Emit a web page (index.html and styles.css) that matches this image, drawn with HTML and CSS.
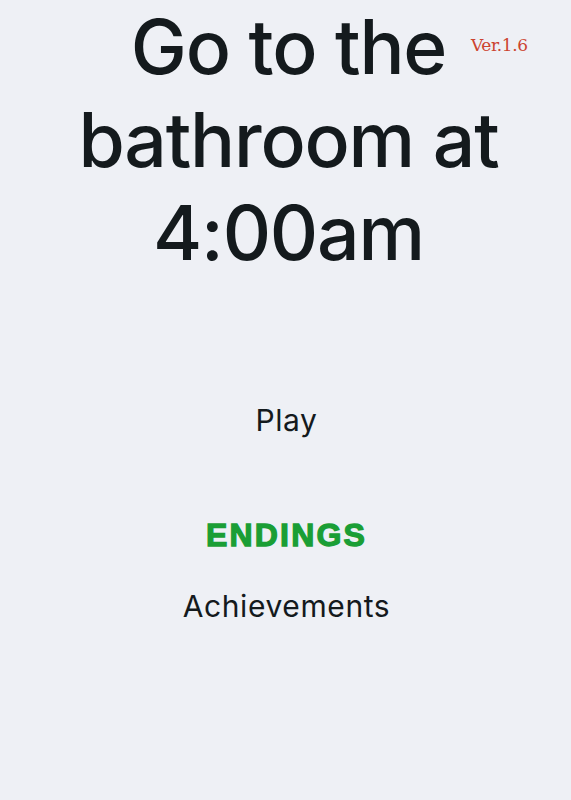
FILE: index.html
```html
<!DOCTYPE html>
<html lang="en">
<head>
  <meta charset="UTF-8" />
  <title>Go to the bathroom at 4:00am</title>
  <link rel="stylesheet" href="styles.css">
</head>
<body>

<div class="screen">
  <span class="version">Ver.1.6</span>
  <h1 class="title">
    <span class="line">Go to the</span>
    <span class="line">bathroom at</span>
    <span class="line">4:00am</span>
  </h1>

  <div class="menu">
    <button class="menu-item play">Play</button>
    <button class="menu-item endings">ENDINGS</button>
    <button class="menu-item">Achievements</button>
  </div>
</div>

</body>
</html>
```

FILE: styles.css
```css
html, body { margin: 0; padding: 0; background: #eef0f5; }
body { font-family: Inter, "Noto Sans", sans-serif; color: #141a1d; }
.screen { position: relative; width: 571px; height: 800px; display: flex; flex-direction: column; align-items: center; }
.version { position: absolute; top: 35px; left: 471px; font-family: "DejaVu Serif", "Liberation Serif", serif; font-size: 17px; color: #cc4430; letter-spacing: -0.4px; }
.title { margin: 0 0 0 6px; display: flex; flex-direction: column; align-items: center; font-size: 75px; font-weight: 500; line-height: 93px; letter-spacing: -1.2px; }
.line { display: block; white-space: nowrap; }
.menu { display: flex; flex-direction: column; align-items: center; margin-top: 123px; margin-left: 2px; }
.menu-item { background: none; border: none; padding: 0; font-family: Inter, "Noto Sans", sans-serif; font-size: 30px; color: #141a1d; letter-spacing: 0.6px; line-height: 36px; cursor: pointer; }
.play { margin-bottom: 79px; }
.endings { font-family: "Liberation Sans", Arial, sans-serif; font-weight: 900; color: #1a9e35; font-size: 32px; letter-spacing: 2.2px; margin-bottom: 35px; -webkit-text-stroke: 1.3px #1a9e35; }
```
